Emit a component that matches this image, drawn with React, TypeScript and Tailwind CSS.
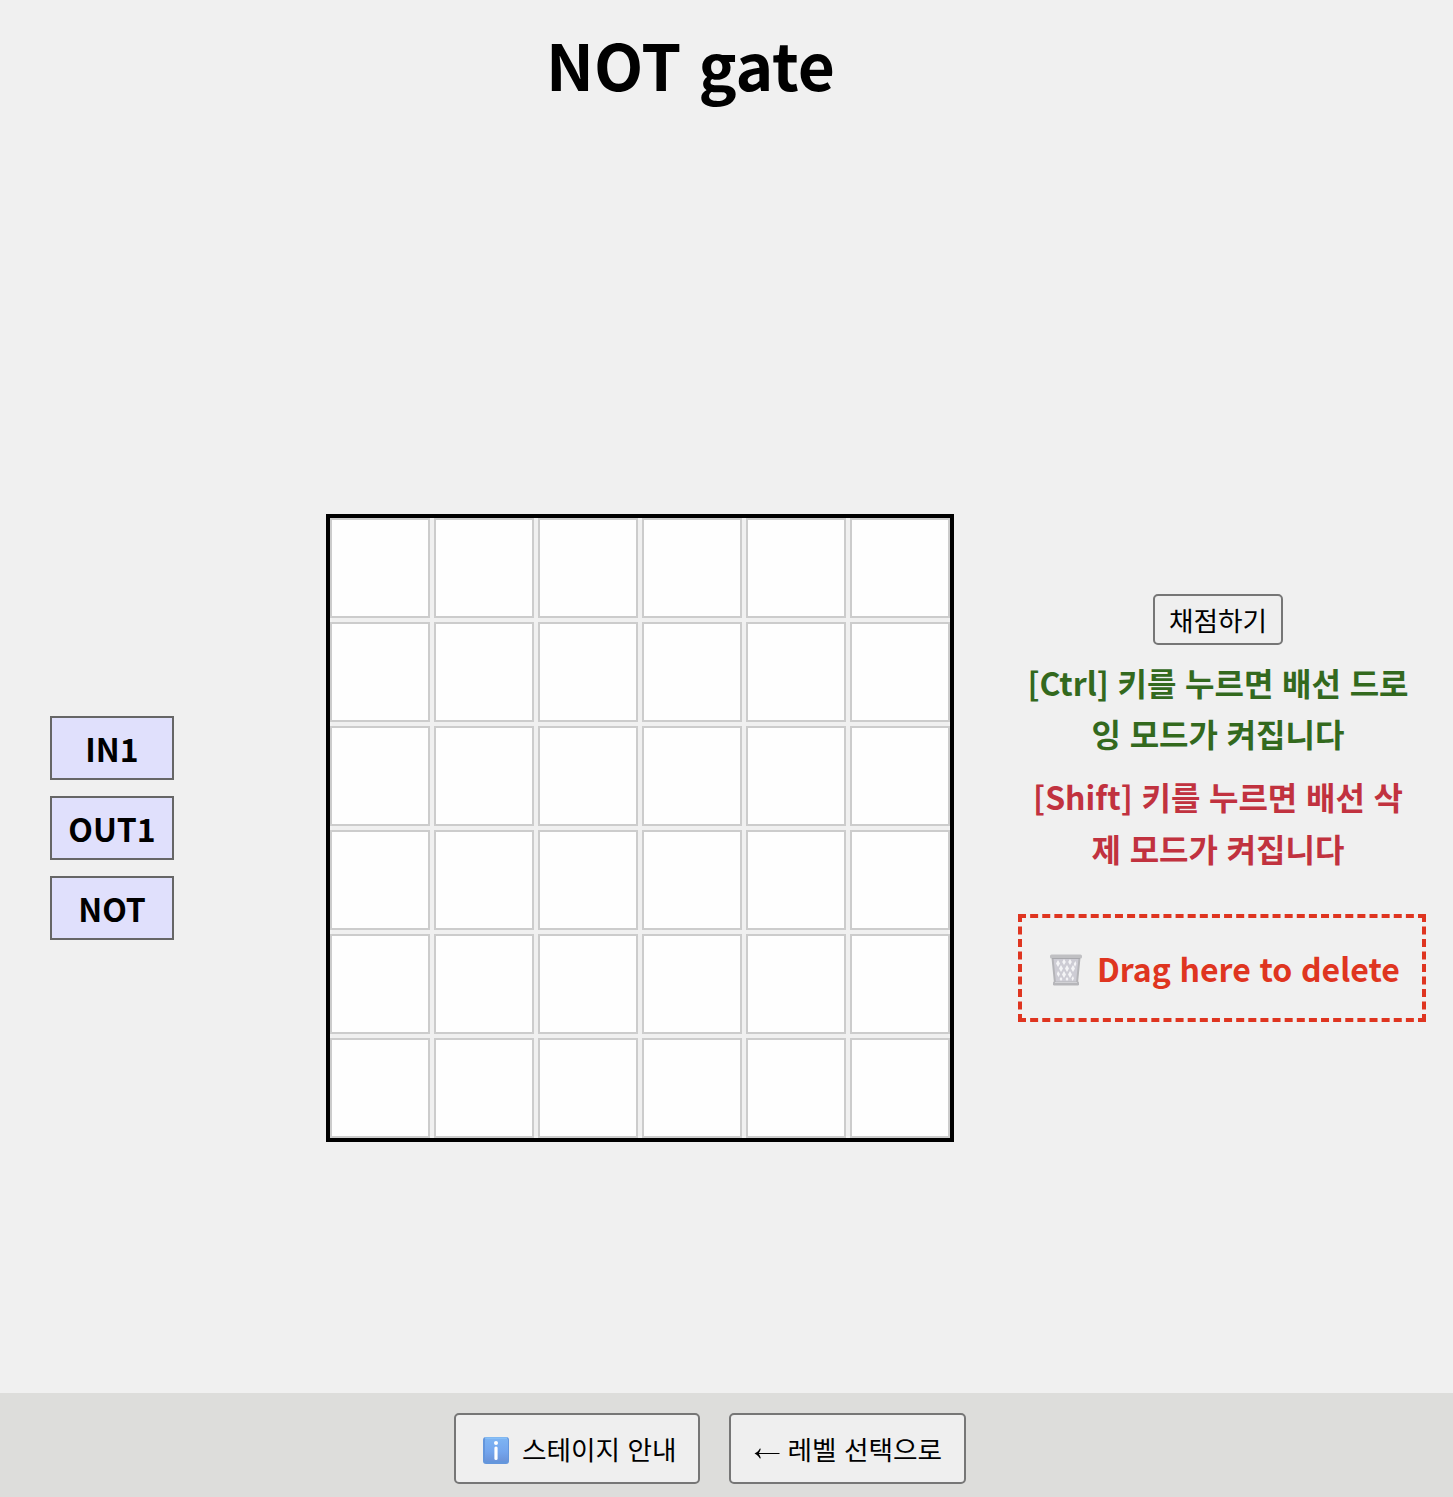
const BLOCKS = ["IN1", "OUT1", "NOT"];
const CELLS = Array.from({ length: 36 }, (_, i) => i);

function TrashIcon() {
  return (
    <svg width="34" height="34" viewBox="0 0 34 34" className="mt-[4px] shrink-0">
      <path d="M3 4h28l-3 26H6z" fill="#cdccd4" />
      <path
        d="M9 7l-2 3.500 2 3.500 2-3.500zM15 6l-1.800 3 1.800 3 1.800-3zM21 6l-1.800 3 1.800 3 1.800-3zM26.500 8l-1.800 3 1.300 3 1.300-3zM12 12l-2 3.500 2 3.500 2-3.500zM18 12l-2 3.500 2 3.500 2-3.500zM24 12l-2 3.500 2 3.500 2-3.500zM9 18l-1.200 3 1.700 3 1.500-3zM15 18l-2 3.500 2 3.500 2-3.500zM21 18l-2 3.500 2 3.500 2-3.500zM12 24l-1.500 2 1.500 2 1.500-2zM18 24l-1.500 2 1.500 2 1.500-2zM24 23l-1.500 2.500 1 2.500 1.500-2.500z"
        fill="#f4f4f6"
      />
      <path d="M3.500 5l2.500 25M30.500 5L28 30" stroke="#b4b4b8" strokeWidth="2" />
      <rect x="1" y="1.500" width="32" height="4" rx="1.500" fill="#c0c0c3" />
      <path d="M3 5.500h28" stroke="#a8a8ad" strokeWidth="1" />
      <rect x="4" y="28.500" width="26" height="4" rx="1.200" fill="#b6b6ba" />
      <path d="M6 29.500h22" stroke="#d2d2d6" strokeWidth="1" />
    </svg>
  );
}

function InfoIcon() {
  return (
    <svg width="26" height="27" viewBox="0 0 26 27" className="mt-[3px] shrink-0">
      <defs>
        <linearGradient id="info-face" x1="0" y1="0" x2="0" y2="1">
          <stop offset="0" stopColor="#7db4f3" />
          <stop offset="0.6" stopColor="#74a5ed" />
          <stop offset="1" stopColor="#6b94da" />
        </linearGradient>
      </defs>
      <rect width="26" height="27" rx="3" fill="#6496dc" />
      <rect x="2" y="1" width="23" height="23" rx="2" fill="url(#info-face)" />
      <path d="M2 1h22" stroke="#8bc3f8" strokeWidth="1.5" />
      <circle cx="13" cy="6" r="2" fill="#fff" />
      <rect x="11.4" y="9.5" width="3.2" height="13.5" rx="1.5" fill="#fff" />
    </svg>
  );
}

function ArrowLeft() {
  return (
    <svg width="27" height="12" viewBox="0 0 27 12" className="mt-[9px] shrink-0">
      <path d="M0.500 6.500C3 5.300 4.800 3.500 5.900 1.400L6.800 1.800C6.400 3.400 5.800 4.700 4.900 6H25.500V7.100H4.900C5.800 8.300 6.400 9.600 6.800 11.200L5.900 11.600C4.800 9.500 3 7.700 0.500 6.500Z" />
    </svg>
  );
}

export default function App() {
  return (
    <div className="flex h-[1497px] w-[1453px] flex-col overflow-hidden bg-[#f0f0f0] font-['Noto_Sans_CJK_KR',sans-serif] text-black">
      <header className="flex h-[126px] w-[1380px] shrink-0 items-center justify-center">
        <h1 className="pl-px text-[64px] leading-none font-bold [word-spacing:2.8px]">NOT gate</h1>
      </header>

      <main className="flex grow items-start">
        <div className="mt-[590px] ml-[50px] flex w-[124px] shrink-0 flex-col gap-4">
          {BLOCKS.map((name) => (
            <div
              key={name}
              className="flex h-16 items-center justify-center border-2 border-[#666] bg-[#e0e0fc] text-[32px] leading-none font-bold"
            >
              {name}
            </div>
          ))}
        </div>

        <div className="mt-[388px] ml-[152px] grid shrink-0 grid-cols-[repeat(6,100px)] gap-1 border-4 border-black">
          {CELLS.map((i) => (
            <div key={i} className="h-[100px] border-2 border-[#ccc] bg-[#fefefe]" />
          ))}
        </div>

        <div className="mt-[468px] ml-16 flex w-[400px] shrink-0 flex-col [word-spacing:1.4px]">
          <button className="flex h-[51px] w-[130px] items-center justify-center self-center rounded-[5px] border-2 border-[#767676] bg-[#efefef] pt-[2px] text-[26.67px] leading-none">
            채점하기
          </button>
          <p className="mt-[11.5px] text-center text-[32px] leading-[51.2px] font-bold text-[#33691e]">
            [Ctrl] 키를 누르면 배선 드로
            <br />잉 모드가 켜집니다
          </p>
          <p className="mt-[12.4px] text-center text-[32px] leading-[51.2px] font-bold text-[#c1323f]">
            [Shift] 키를 누르면 배선 삭<br />제 모드가 켜집니다
          </p>
          <div className="mt-[40.2px] flex h-[108px] w-[408px] items-center border-4 border-dashed border-[#df3520] pl-[27px] text-[32px] leading-none font-bold whitespace-nowrap text-[#df3520]">
            <TrashIcon />
            <span className="ml-[14px]">Drag here to delete</span>
          </div>
        </div>
      </main>

      <footer className="flex h-[104px] shrink-0 gap-[29px] bg-[#dddddb] pt-5 pl-[454px] text-[26.67px] leading-none">
        <button className="flex h-[71px] w-[246px] items-center rounded-[5px] border-2 border-[#767676] bg-[#efefef] pl-[27px] [word-spacing:1.4px]">
          <InfoIcon />
          <span className="mt-[2px] ml-[13px] whitespace-nowrap">스테이지 안내</span>
        </button>
        <button
          aria-label="레벨 선택으로"
          className="flex h-[71px] w-[237px] items-center rounded-[5px] border-2 border-[#767676] bg-[#efefef] pl-[23px] whitespace-nowrap [word-spacing:1.4px]"
        >
          <ArrowLeft />
          <span className="mt-[2px] ml-[6.5px]">레벨 선택으로</span>
        </button>
      </footer>
    </div>
  );
}
